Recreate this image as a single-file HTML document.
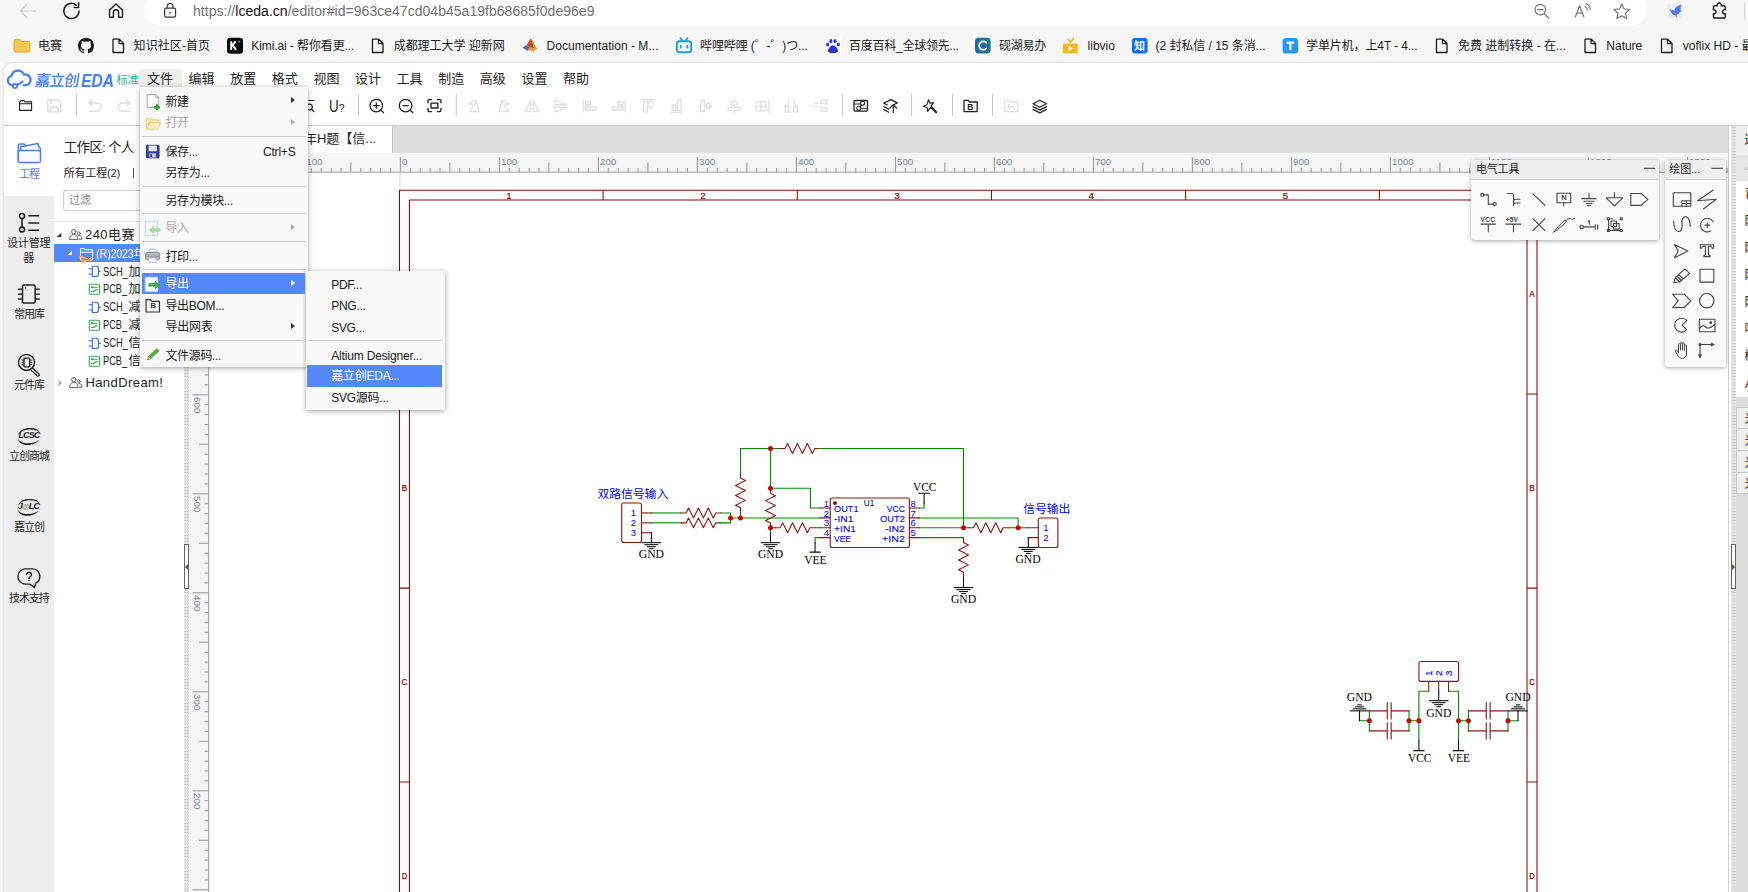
<!DOCTYPE html>
<html lang="zh-CN">
<head>
<meta charset="utf-8">
<title>嘉立创EDA</title>
<style>
*{box-sizing:border-box;margin:0;padding:0}
html,body{width:1748px;height:892px;overflow:hidden;background:#f7f7f7}
body{position:relative;font-family:"Liberation Sans","Noto Sans CJK SC",sans-serif;color:#222;font-size:12px}
.a{position:absolute;white-space:nowrap}
.t{position:absolute;white-space:nowrap;line-height:1;transform-origin:0 50%}
svg{position:absolute;overflow:visible}
.bm{font-size:12px;color:#1b1b1b;top:39.5px}
.page{left:4px;top:63px;width:1760px;height:840px;background:#fff;border-radius:9px 0 0 0;box-shadow:0 0 3px rgba(0,0,0,.18)}
.mn{font-size:13px;color:#222;top:71.5px}
.menu{background:#f9f9f9;box-shadow:0 1px 5px rgba(0,0,0,.38);}
.mi{font-size:12px;color:#1a1a1a}
.mi.d{color:#a9a9a9}
.sep{position:absolute;height:1px;background:#c9c9c9}
.arr{position:absolute;width:0;height:0;border-left:4px solid #333;border-top:3.5px solid transparent;border-bottom:3.5px solid transparent}
.arr.d{border-left-color:#aaa}
.sb{font-size:11px;color:#222;text-align:center;width:49px;left:4px;line-height:13px;white-space:normal}
.tr{font-size:12px;color:#222}
.rl{font-size:9.700px;fill:#7d8797;font-family:"Liberation Sans",sans-serif}
.dots{background-color:#e2e2e2;background-image:radial-gradient(circle,#c4c4c4 .6px,transparent .8px);background-size:2.400px 3px}
</style>
</head>
<body>
<!-- ===== browser chrome ===== -->
<div class="a" style="left:144px;top:-8px;width:1503px;height:34px;background:#fff;border-radius:17px;"></div>
<svg style="left:0;top:0" width="1748" height="30" viewBox="0 0 1748 30" fill="none" stroke-linecap="round" stroke-linejoin="round">
  <!-- back -->
  <path d="M36 11H21M27 4.5L20.5 11L27 17.5" stroke="#cbcbcb" stroke-width="1.2"/>
  <!-- refresh -->
  <path d="M79 11A7.6 7.6 0 1 1 76.2 5.1" stroke="#1b1b1b" stroke-width="1.5"/>
  <path d="M78.6 2.8V7.4H74" stroke="#1b1b1b" stroke-width="1.5"/>
  <!-- home -->
  <path d="M109.5 10.2L116 4L122.5 10.2V17.3H118.6V12.4a2.6 2.6 0 0 0-5.2 0V17.3H109.5Z" stroke="#1b1b1b" stroke-width="1.4"/>
  <!-- lock -->
  <rect x="164.6" y="8.2" width="11" height="9" rx="1.6" stroke="#3a3a3a" stroke-width="1.2"/>
  <path d="M167.2 8V6.2a2.9 2.9 0 0 1 5.8 0V8" stroke="#3a3a3a" stroke-width="1.2"/>
  <circle cx="170.1" cy="12.7" r="0.9" fill="#3a3a3a" stroke="none"/>
  <!-- zoom out -->
  <circle cx="1540.3" cy="9.6" r="5.3" stroke="#767676" stroke-width="1.2"/>
  <path d="M1537.6 9.6H1543M1544.2 13.6L1548.6 18" stroke="#767676" stroke-width="1.2"/>
  <!-- star -->
  <path d="M1621.8 3.8L1624.1 8.9L1629.6 9.5L1625.5 13.2L1626.7 18.6L1621.8 15.8L1616.9 18.6L1618.1 13.2L1614 9.5L1619.5 8.9Z" stroke="#767676" stroke-width="1.2"/>
  <!-- read aloud -->
  <path d="M1575.3 17L1579.6 5.6L1583.9 17M1576.8 13.2H1582.4" stroke="#767676" stroke-width="1.2"/>
  <path d="M1585 6.4a4.4 4.4 0 0 1 2.4 3.6M1586 3.6a7.4 7.4 0 0 1 4.3 6" stroke="#767676" stroke-width="1.1"/>
  <!-- bird ext -->
  <rect x="1667.400" y="3.500" width="15" height="15" rx="1.500" fill="#eceffc" stroke="none"/>
  <path d="M1669.600 9.300L1674.300 10.600C1675.300 6.800 1678.300 5 1681.800 4.800C1680.300 6.600 1680.900 8.300 1680.500 10.300L1682.300 11.300L1680 11.800C1679.300 13.600 1677.900 14.600 1676.300 15L1677.600 17.600L1674.600 15.300C1672 14.300 1670.600 12 1669.600 9.300Z" fill="#4f7cf3" stroke="none"/>
  <path d="M1676.300 15L1677.600 17.600L1674.600 15.300C1675.600 14.300 1676.600 13 1677.300 11.300C1677.300 12.600 1677 14 1676.300 15Z" fill="#a86af0" stroke="none"/>
  <!-- puzzle -->
  <path d="M1714.6 5.8h2.6a2.1 2.1 0 1 1 4 0h2.8a1.2 1.2 0 0 1 1.2 1.2v2.7a2.1 2.1 0 1 0 0 4v3.1a1.2 1.2 0 0 1-1.2 1.2h-9.4a1.2 1.2 0 0 1-1.2-1.2v-3a2.1 2.1 0 1 0 0-4.1V7a1.2 1.2 0 0 1 1.2-1.2Z" stroke="#1b1b1b" stroke-width="1.4"/>
  <path d="M1744.5 3V19" stroke="#cfcfcf" stroke-width="1"/>
</svg>
<div class="t" id="url" style="letter-spacing:0.030px;left:193px;top:4px;font-size:14px;color:#707070;">https://<span style="color:#111">lceda.cn</span>/editor#id=963ce47cd04b45a19fb68685f0de96e9</div>

<!-- bookmarks -->
<svg style="left:0;top:30px" width="1748" height="32" viewBox="0 30 1748 32" fill="none" stroke-linejoin="round" stroke-linecap="round">
  <!-- folder -->
  <path d="M14 41.2a1.6 1.6 0 0 1 1.6-1.6h4.3l1.9 1.7h6.5a1.6 1.6 0 0 1 1.6 1.6v7.6a1.6 1.6 0 0 1-1.6 1.6h-12.7a1.6 1.6 0 0 1-1.6-1.6Z" fill="#f5c951" stroke="#dba72c" stroke-width="1"/>
  <!-- github -->
  <path transform="translate(78 37.700)" fill="#1b1b1b" d="M8 0C3.58 0 0 3.58 0 8c0 3.54 2.29 6.53 5.47 7.59.4.07.55-.17.55-.38 0-.19-.01-.82-.01-1.49-2.01.37-2.53-.49-2.69-.94-.09-.23-.48-.94-.82-1.13-.28-.15-.68-.52-.01-.53.63-.01 1.08.58 1.23.82.72 1.21 1.87.87 2.33.66.07-.52.28-.87.51-1.07-1.78-.2-3.64-.89-3.64-3.95 0-.87.31-1.59.82-2.15-.08-.2-.36-1.02.08-2.12 0 0 .67-.21 2.2.82.64-.18 1.32-.27 2-.27.68 0 1.36.09 2 .27 1.53-1.04 2.2-.82 2.2-.82.44 1.1.16 1.92.08 2.12.51.56.82 1.27.82 2.15 0 3.07-1.87 3.75-3.65 3.95.29.25.54.73.54 1.48 0 1.07-.01 1.93-.01 2.2 0 .21.15.46.55.38A8.013 8.013 0 0016 8c0-4.42-3.58-8-8-8z"/>
  <!-- doc icons -->
  <g stroke="#1b1b1b" stroke-width="1.3">
    <path id="doc" d="M113 39.2h6.200l4.300 4.300v9h-10.500Z M119 39.4v4.300h4.300" />
  </g>
  <use href="#doc" x="259.500" stroke="#1b1b1b" stroke-width="1.3"/>
  <use href="#doc" x="1323.500" stroke="#1b1b1b" stroke-width="1.3"/>
  <use href="#doc" x="1472" stroke="#1b1b1b" stroke-width="1.3"/>
  <use href="#doc" x="1548.500" stroke="#1b1b1b" stroke-width="1.3"/>
  <!-- kimi -->
  <rect x="227" y="37.7" width="16" height="16" rx="3.2" fill="#0a0a0a"/>
  <path d="M231.200 41.3v8.800M231.500 46l4.200-4.700M232.800 45.200l3.200 4.900" stroke="#fff" stroke-width="1.9" stroke-linecap="butt"/>
  <circle cx="239.300" cy="41.600" r="1.100" fill="#2d8cff"/>
  <!-- matlab -->
  <path d="M522.500 47.500l4.200-2.600 3.300 2.700-2.500 3.400Z" fill="#4a6fb5"/>
  <path d="M526.700 44.900c1.800-2.200 2.800-5.300 4.300-6.300l1.200 2.400 2.200 7.800-4.400-1.200Z" fill="#c8502a"/>
  <path d="M531 38.600c1.300.4 3.200 6.200 6.200 10.500-1.600-.5-2.700.7-3.800 3.200-1.200-1.300-2.200-2.900-5.900-1.300l2.500-3.400 4.400 1.200Z" fill="#e8902a"/>
  <!-- bilibili -->
  <rect x="676.800" y="41.200" width="14.400" height="11" rx="2.600" stroke="#1ba0d8" stroke-width="1.900"/>
  <path d="M680.500 38.300l2 2.600M687.500 38.300l-2 2.600" stroke="#1ba0d8" stroke-width="1.800"/>
  <path d="M680.700 45.600v2M687.300 45.600v2" stroke="#1ba0d8" stroke-width="1.900"/>
  <!-- baidu paw -->
  <rect x="825" y="37.500" width="16" height="16" rx="2" fill="#fff"/>
  <g fill="#2932e1">
    <ellipse cx="827.600" cy="44.600" rx="1.500" ry="2"/>
    <ellipse cx="830.900" cy="41.200" rx="1.500" ry="2.100"/>
    <ellipse cx="835" cy="41.200" rx="1.500" ry="2.100"/>
    <ellipse cx="838.300" cy="44.600" rx="1.500" ry="2"/>
    <path d="M833 45.200c2 0 5 3.500 5 5.600 0 1.900-1.700 2.200-5 2.200s-5-.3-5-2.200c0-2.100 3-5.600 5-5.600Z"/>
  </g>
  <!-- C icon -->
  <rect x="975" y="37.800" width="15.600" height="15.600" rx="3.600" fill="#1f6f9b"/>
  <path d="M986.300 42.700a4.200 4.200 0 1 0 0 5.800" stroke="#fff" stroke-width="1.700"/>
  <!-- libvio -->
  <path d="M1063 43.600h14.600v9.600h-14.600Z" fill="#f6b51d"/>
  <path d="M1068 39l2.400 3.300 3-4" stroke="#f6b51d" stroke-width="1.500"/>
  <path d="M1068.300 45.800l5 2.700-5 2.700Z" fill="#fff"/>
  <!-- zhihu -->
  <rect x="1132" y="38" width="15.600" height="15.600" rx="3" fill="#0a6cff"/>
  <!-- T icon -->
  <rect x="1282.600" y="38" width="15.600" height="15.600" rx="3.400" fill="#2697ee"/>
  <path d="M1286.600 42.600h7.600M1290.400 42.600v7.600" stroke="#fff" stroke-width="2.100" stroke-linecap="butt"/>
</svg>
<div class="t" style="left:1134px;top:40.500px;font-size:11px;color:#fff;font-weight:700">知</div>
<div class="t bm" style="letter-spacing:-0.008px;left:38px">电赛</div>
<div class="t bm" style="letter-spacing:0.071px;left:133.600px">知识社区-首页</div>
<div class="t bm" style="letter-spacing:-0.099px;left:251.300px">Kimi.ai - 帮你看更...</div>
<div class="t bm" style="letter-spacing:-0.034px;left:393.700px">成都理工大学 迎新网</div>
<div class="t bm" style="letter-spacing:0.031px;left:546.500px">Documentation - M...</div>
<div class="t bm" style="letter-spacing:-0.116px;left:700px">哔哩哔哩 (゜-゜)つ...</div>
<div class="t bm" style="letter-spacing:-0.249px;left:849px">百度百科_全球领先...</div>
<div class="t bm" style="letter-spacing:-0.254px;left:999px">砚湖易办</div>
<div class="t bm" style="letter-spacing:0.023px;left:1087.500px">libvio</div>
<div class="t bm" style="letter-spacing:-0.041px;left:1155.500px">(2 封私信 / 15 条消...</div>
<div class="t bm" style="letter-spacing:-0.109px;left:1306px">学单片机，上4T - 4...</div>
<div class="t bm" style="letter-spacing:-0.001px;left:1458px">免费 进制转换 - 在...</div>
<div class="t bm" style="letter-spacing:-0.005px;left:1606.300px">Nature</div>
<div class="t bm" style="left:1682.800px">voflix HD - 最新</div>
<!-- ===== app page ===== -->
<div class="a page"></div>
<!-- logo -->
<svg style="left:0;top:60px" width="160" height="70" viewBox="0 60 160 70" fill="none" stroke-linecap="round" stroke-linejoin="round">
  <path d="M13.300 85.200h-.8a4.700 4.700 0 0 1-.9-9.300a6.500 6.500 0 0 1 12.400-1.300a5.400 5.400 0 0 1 2.300 10.600h-2.600" stroke="#4b7df6" stroke-width="2.300"/>
  <circle cx="15" cy="86" r="2.100" stroke="#4b7df6" stroke-width="1.800"/>
  <path d="M17 85l5.600-3.300" stroke="#4b7df6" stroke-width="2.100"/>
  <!-- toolbar: open folder -->
  <path d="M19.600 110.400v-8.300l1.500-1.500h3.200l1 1.300h6.300v8.500Z M19.800 103.800h11.600" stroke="#222" stroke-width="1.100"/>
  <!-- save (disabled) -->
  <path d="M47.800 99.900h10.300l2.800 2.800v9h-13.100Z M50.600 111.500v-4.400h7.600v4.400 M50.800 100.300v3.300" stroke="#e0e0e0" stroke-width="1.600"/>
  <path d="M76.500 94.300V115.600" stroke="#c6c6c6" stroke-width="1"/>
  <!-- undo / redo -->
  <path d="M89 111.300h7.600a4.200 4.200 0 0 0 0-8.400h-7.300M92 100.300l-3 2.600l3 2.600" stroke="#e0e0e0" stroke-width="1.600"/>
  <path d="M130 111.300h-7.600a4.200 4.200 0 0 1 0-8.400h7.300M127 100.300l3 2.600l-3 2.600" stroke="#e0e0e0" stroke-width="1.600"/>
</svg>
<div class="t" style="letter-spacing:-0.969px;left:34.800px;top:72.800px;font-size:15.500px;font-weight:500;color:#4b7df6"><span style="display:inline-block;transform:skewX(-9deg)">嘉立创</span></div>
<div class="t" style="left:81.300px;top:71.600px;font-size:18px;font-weight:700;font-style:italic;color:#4b7df6;transform:scaleX(.875);letter-spacing:-.2px">EDA</div>
<div class="t" style="letter-spacing:-0.250px;left:116.200px;top:75.200px;font-size:11.500px;color:#22b598">标准</div>
<!-- menubar -->
<div class="a" style="left:139px;top:68.500px;width:42.500px;height:19px;background:#efefef;border-radius:2px 2px 0 0"></div>
<div class="t mn" style="letter-spacing:-0.008px;left:147px">文件</div>
<div class="t mn" style="letter-spacing:-0.008px;left:188.600px">编辑</div>
<div class="t mn" style="letter-spacing:-0.008px;left:230.200px">放置</div>
<div class="t mn" style="letter-spacing:-0.008px;left:271.800px">格式</div>
<div class="t mn" style="letter-spacing:-0.008px;left:313.400px">视图</div>
<div class="t mn" style="letter-spacing:-0.008px;left:355px">设计</div>
<div class="t mn" style="letter-spacing:-0.008px;left:396.600px">工具</div>
<div class="t mn" style="letter-spacing:-0.008px;left:438.200px">制造</div>
<div class="t mn" style="letter-spacing:-0.008px;left:479.800px">高级</div>
<div class="t mn" style="letter-spacing:-0.008px;left:521.400px">设置</div>
<div class="t mn" style="letter-spacing:-0.008px;left:563px">帮助</div>
<svg style="left:300px;top:90px" width="800" height="34" viewBox="300 90 800 34" fill="none" stroke-linecap="round" stroke-linejoin="round">
<path d="M308 100.500h6" stroke="#222" stroke-width="1.200"/><circle cx="309.500" cy="107" r="2.800" stroke="#222" stroke-width="1.200"/><path d="M311.600 109.200l2.300 2.400" stroke="#222" stroke-width="1.300"/>
<path d="M358.5 94.3V115.6" stroke="#c6c6c6" stroke-width="1"/>
<circle cx="376.3" cy="105.600" r="6.300" stroke="#222" stroke-width="1.300"/>
<path d="M380.90000000000003 110.200l2.600 2.400" stroke="#222" stroke-width="1.300"/>
<path d="M373.6 105.600h5.400" stroke="#222" stroke-width="1.200"/>
<path d="M376.3 102.900v5.400" stroke="#222" stroke-width="1.200"/>
<circle cx="405.6" cy="105.600" r="6.300" stroke="#222" stroke-width="1.300"/>
<path d="M410.20000000000005 110.200l2.600 2.400" stroke="#222" stroke-width="1.300"/>
<path d="M402.90000000000003 105.600h5.400" stroke="#222" stroke-width="1.200"/>
<path d="M428 102.800v-2.200a1 1 0 0 1 1-1h2.400M437.500 99.600h2.400a1 1 0 0 1 1 1v2.200M440.900 108.400v2.200a1 1 0 0 1-1 1h-2.400M431.400 111.600h-2.400a1 1 0 0 1-1-1v-2.200" stroke="#222" stroke-width="1.400"/>
<rect x="431" y="103.200" width="6.900" height="4.800" stroke="#222" stroke-width="1.300"/>
<path d="M456.3 94.3V115.6" stroke="#c6c6c6" stroke-width="1"/>
<path d="M478.8 111.500h-9l6.500-10.500ZM470.3 104.500a5 5 0 0 1 5-4M469.0 103l1.300 2l2-1.200" stroke="#e0e0e0" stroke-width="1.400"/>
<path d="M499.2 111.500h9l-6.500-10.500ZM507.7 104.500a5 5 0 0 0-5-4M509.0 103l-1.300 2l-2-1.200" stroke="#e0e0e0" stroke-width="1.400"/>
<path d="M530.7 100.500v11h-5.400ZM533.3 100.500v11h5.400Z" stroke="#e0e0e0" stroke-width="1.400"/>
<path d="M555 100.300l12 4.500h-12ZM555 112l12-4.700h-12Z" stroke="#e0e0e0" stroke-width="1.400"/>
<path d="M583.5 100.500v11.500" stroke="#e0e0e0" stroke-width="1.400"/><rect x="585.7" y="102" width="5" height="3" stroke="#e0e0e0" stroke-width="1.400"/><rect x="585.7" y="107" width="10.500" height="3" stroke="#e0e0e0" stroke-width="1.400"/>
<path d="M625.2 100.500v11.500" stroke="#e0e0e0" stroke-width="1.400"/><rect x="618.0" y="102" width="5" height="3" stroke="#e0e0e0" stroke-width="1.400"/><rect x="612.5" y="107" width="10.500" height="3" stroke="#e0e0e0" stroke-width="1.400"/>
<path d="M642 99.500h12" stroke="#e0e0e0" stroke-width="1.400"/><rect x="643.7" y="101.500" width="3.600" height="10.500" stroke="#e0e0e0" stroke-width="1.400"/><rect x="649" y="101.500" width="3.600" height="5.500" stroke="#e0e0e0" stroke-width="1.400"/>
<path d="M670.5 112.500h12" stroke="#e0e0e0" stroke-width="1.400"/><rect x="677.5" y="100" width="3.600" height="10.500" stroke="#e0e0e0" stroke-width="1.400"/><rect x="672.2" y="105" width="3.600" height="5.500" stroke="#e0e0e0" stroke-width="1.400"/>
<path d="M698.8 106h13" stroke="#e0e0e0" stroke-width="1.300"/><rect x="700.8" y="100.500" width="3.600" height="11" fill="#fff" stroke="#e0e0e0" stroke-width="1.400"/><rect x="706.5999999999999" y="103.500" width="3.300" height="5" fill="#fff" stroke="#e0e0e0" stroke-width="1.400"/>
<path d="M734 99.500v13" stroke="#e0e0e0" stroke-width="1.300"/><rect x="730.8" y="101.500" width="6.400" height="3.300" fill="#fff" stroke="#e0e0e0" stroke-width="1.400"/><rect x="728.3" y="107.300" width="11.400" height="3.300" fill="#fff" stroke="#e0e0e0" stroke-width="1.400"/>
<rect x="756.2" y="101.500" width="9.600" height="9.200" stroke="#e0e0e0" stroke-width="1.400"/><path d="M761.0 101.500v9.200M756.2 106.100h9.600M769.0 99.500v13" stroke="#e0e0e0" stroke-width="1.400"/>
<path d="M788.5999999999999 99.500v4.500M794.0 99.500v4.500" stroke="#e0e0e0" stroke-width="1.300"/><rect x="785.3" y="106" width="3.600" height="6" stroke="#e0e0e0" stroke-width="1.400"/><rect x="793.6999999999999" y="106" width="3.600" height="6" stroke="#e0e0e0" stroke-width="1.400"/>
<path d="M813.8 103.300h4.500M813.8 106.700h4.500" stroke="#e0e0e0" stroke-width="1.300"/><rect x="820.8" y="100.300" width="6" height="3.600" stroke="#e0e0e0" stroke-width="1.400"/><rect x="820.8" y="107.500" width="6" height="3.600" stroke="#e0e0e0" stroke-width="1.400"/>
<path d="M842.4 94.3V115.6" stroke="#c6c6c6" stroke-width="1"/>
<rect x="854" y="100.500" width="13.500" height="10.600" rx="1" stroke="#222" stroke-width="1.300"/><circle cx="862.600" cy="103.300" r="2" stroke="#222" stroke-width="1.100"/><circle cx="858.800" cy="108.200" r="2" stroke="#222" stroke-width="1.100"/><path d="M854.300 104h5.500M861.500 108.200h5.800M860.300 106.300l1.200-1.300" stroke="#222" stroke-width="1.100"/>
<path d="M883.8 103.200l7-3.600l6.500 3.300l-3 1.600M883.8 103.200l3.300 1.700M883.8 106.500l5 2.600M883.8 109.600l5 2.600M893.3 112.500v-7.500M890.0 108l3.300-3.300l3.300 3.300" stroke="#222" stroke-width="1.200"/>
<path d="M911.6 94.3V115.6" stroke="#c6c6c6" stroke-width="1"/>
<path d="M928.5 99.700l1.300 3.600l3.800-.7l-2.300 3.100l2 3l-3.600-.6l-2 3.300l-.5-3.800l-3.700-1.200l3.400-1.700Z" stroke="#222" stroke-width="1.100"/><path d="M931 107.300l5.200 5" stroke="#222" stroke-width="2"/>
<path d="M952.5 94.3V115.6" stroke="#c6c6c6" stroke-width="1"/>
<path d="M964 111.600v-11.200h4.200l1.200 1.600h7.800v9.600Z" stroke="#222" stroke-width="1.300"/>
<path d="M992.5 94.3V115.6" stroke="#c6c6c6" stroke-width="1"/>
<path d="M1004.500 111.600v-11.200h4.200l1.200 1.600h7.800v9.600Z" stroke="#e0e0e0" stroke-width="1.300"/><path d="M1007.500 106.500h4.500a2.300 2.300 0 0 1 2.300 2.300v.8M1009.500 104.300l-2.300 2.200l2.300 2.200" stroke="#e0e0e0" stroke-width="1.300"/>
<path d="M1033.0 103.700l6.800-3.500l6.800 3.500l-6.800 3.500ZM1033.0 106.600l6.800 3.500l6.800-3.500M1033.0 109.400l6.800 3.500l6.800-3.500" stroke="#222" stroke-width="1.200"/>
</svg>
<div class="t" style="left:328.600px;top:99px;font-size:16.800px;color:#2a2a2a;transform:scaleX(.8)">U</div>
<div class="t" style="left:338.800px;top:102.800px;font-size:10.500px;color:#2a2a2a">?</div>
<div class="t" style="left:967.300px;top:102.500px;font-size:8.500px;color:#222;font-weight:700">B</div>
<!-- line under toolbar -->
<div class="a" style="left:4px;top:124.500px;width:1744px;height:1px;background:#cfcfcf"></div>

<!-- left sidebar -->
<div class="a" style="left:4px;top:196px;width:49.500px;height:700px;background:#eeeeee"></div>
<div class="a" style="left:53px;top:221px;width:132px;height:1px;background:#e3e3e3"></div>
<svg style="left:0;top:126px" width="60" height="500" viewBox="0 126 60 500" fill="none" stroke-linecap="round" stroke-linejoin="round">
  <!-- 工程 -->
  <g stroke="#4d7cfe" stroke-width="1.500">
    <path d="M18.300 161v-15.300a1.700 1.700 0 0 1 1.700-1.700h4.300l1.700 1.900"/>
    <rect x="18.300" y="150.500" width="22.200" height="12.100" rx="1.700"/>
    <path d="M20.600 150.300v-3.500l17.400-3.300l.8 3.400a2 2 0 0 1 1.600 2v2"/>
  </g>
  <!-- 设计管理器 -->
  <g stroke="#222" stroke-width="1.500">
    <circle cx="22" cy="216.100" r="2.500"/><circle cx="22" cy="229.600" r="2.500"/>
    <path d="M22 218.700v8.400M28.900 215.800h9.800M28.900 223h9.800M28.900 230.200h9.800" stroke-width="1.600"/>
  </g>
  <!-- 常用库 -->
  <g stroke="#222" stroke-width="1.500">
    <rect x="22.500" y="285.100" width="12.600" height="18" rx="1.300"/>
    <path d="M18.300 289.300h3.700M18.300 294.200h3.700M18.300 299h3.700M35.600 289.300h3.700M35.600 294.200h3.700M35.600 299h3.700" stroke-width="1.400"/>
    <circle cx="25.500" cy="288.100" r=".8" fill="#222" stroke="none"/>
  </g>
  <!-- 元件库 -->
  <g stroke="#222" stroke-width="1.500">
    <circle cx="26.500" cy="362.400" r="8"/>
    <path d="M32.600 368.300l6.300 5.400a1.300 1.300 0 0 1-1.700 2l-6.200-5.600" stroke-width="1.200"/>
    <rect x="24" y="358.100" width="5.600" height="8.800" rx=".6" stroke-width="1.300"/>
    <path d="M21.800 360h2M21.800 362.400h2M21.800 364.800h2M29.800 360h2M29.800 362.400h2M29.800 364.800h2" stroke-width="1"/>
  </g>
  <!-- 立创商城 / 嘉立创 swoosh -->
  <g fill="#222" stroke="none" transform="translate(0 .6)">
    <path id="sw" d="M26 427.900c7-1.300 13.200.8 13.900 4.500-1.800-2.600-6.600-3.900-12.600-3.300-4.600.6-8 2.900-8.900 5.900-.1-3.100 2.800-6.100 7.600-7.100Zm13.300 11.300c-2 3.500-8.200 5.900-13.800 5.100-4.600-.7-7.300-3.200-7.100-6.200.7 2.400 3.600 4.100 7.800 4.500 5.100.5 10.500-1 13.100-3.400Z"/>
    <use href="#sw" x="-.3" y="70.800"/>
  </g>
  <!-- 技术支持 -->
  <g stroke="#222" stroke-width="1.400">
    <path d="M25.500 568.900h6.800a7.600 7.600 0 0 1 3.500 14.300l-1.400 4.300l-4.500-3.400h-4.400a7.600 7.600 0 0 1 0-15.200Z"/>
    <path d="M26.600 574.600a2.400 2.400 0 1 1 3.700 2c-1 .6-1.300 1-1.300 1.900M29 580.300v.3" stroke-width="1.400"/>
  </g>
</svg>
<div class="t" style="letter-spacing:-0.925px;left:18.500px;top:431.200px;font-size:9px;font-weight:700;font-style:italic;color:#222">LCSC</div>
<div class="t" style="letter-spacing:-0.711px;left:17.800px;top:502.300px;font-size:9px;font-weight:700;font-style:italic;color:#222">J<span style="color:#888;font-size:7.500px">@</span>LC</div>
<div class="t" style="letter-spacing:-1.050px;left:19.100px;top:168.500px;font-size:11px;color:#4d7cfe">工程</div>
<div class="t" style="letter-spacing:-0.150px;left:7px;top:238.400px;font-size:11px">设计管理</div>
<div class="t" style="left:23.300px;top:252.700px;font-size:11px">器</div>
<div class="t" style="letter-spacing:-1.033px;left:14.100px;top:308.700px;font-size:11px">常用库</div>
<div class="t" style="letter-spacing:-1.033px;left:14.100px;top:380px;font-size:11px">元件库</div>
<div class="t" style="letter-spacing:-0.975px;left:9px;top:451.200px;font-size:11px">立创商城</div>
<div class="t" style="letter-spacing:-1.033px;left:14.100px;top:522.200px;font-size:11px">嘉立创</div>
<div class="t" style="letter-spacing:-1.050px;left:9px;top:593.200px;font-size:11px">技术支持</div>

<!-- project panel -->
<div class="t" style="letter-spacing:-0.759px;left:63.700px;top:140.800px;font-size:13.500px;color:#222">工作区: 个人</div>
<div class="t" style="letter-spacing:-0.165px;left:63.700px;top:167.500px;font-size:11px;color:#222">所有工程(2)</div>
<div class="a" style="left:132.500px;top:168px;width:1px;height:10px;background:#555"></div>
<div class="a" style="left:63px;top:190px;width:121px;height:20.500px;border:1px solid #cfcfcf;border-right:0;border-radius:3px 0 0 3px;background:#fff"></div>
<div class="t" style="letter-spacing:0.000px;left:69px;top:194.800px;font-size:11px;color:#8a8a8a">过滤</div>
<!-- tree -->
<div class="a" style="left:54px;top:244.200px;width:131px;height:17.600px;background:#5588fd"></div>
<svg style="left:50px;top:222px" width="140" height="175" viewBox="50 222 140 175" fill="none" stroke-linecap="round" stroke-linejoin="round">
  <path d="M56.800 237l4.500-4.300v4.300Z" fill="#333"/>
  <path d="M67.500 254.900l4.400-4.400v4.400Z" fill="#fff"/>
  <path d="M58.600 379.800l3.400 3.300l-3.400 3.300Z" fill="#a9a9a9" stroke="none"/>
  <g id="team" stroke="#555" stroke-width="0.900">
    <circle cx="73.800" cy="231.600" r="2.200"/><path d="M69.600 239.200c0-3 1.700-4.700 4.200-4.700s4.200 1.700 4.200 4.700Z"/>
    <circle cx="78.800" cy="233.400" r="1.500"/><path d="M79 235.600c2 0 3 1.400 3 3.600h-3"/>
  </g>
  <use href="#team" y="148"/>
  <!-- project icon (white on blue) -->
  <path d="M80.500 259v-9.500a1 1 0 0 1 1-1h2.600l.9 1.100h6.600a1 1 0 0 1 1 1v8.400a1 1 0 0 1-1 1h-10.100a1 1 0 0 1-1-1Z M80.700 252.300h12.200" stroke="#fff" stroke-width="1.100"/>
  <path d="M77.800 257.300c2.200-1.600 4-2 6.200-.8l3.300 1.500c1 .5.400 1.700-.6 1.500l-3.100-.7M87.300 259l4.400-2.300c1-.5 1.800.6 1 1.300l-5 3.300c-1.500.9-3 .9-4.600.5l-5-1.300Z" fill="#ffb27a" stroke="#b55a2a" stroke-width="0.500"/>
  <!-- sch / pcb icons -->
  <g id="sch" stroke="#2f6fe0" stroke-width="1.100">
    <path d="M92.300 266.300h3.600a2.600 2.600 0 0 1 2.600 2.600v5a2.600 2.600 0 0 1-2.600 2.600h-3.600Z"/>
    <path d="M89 268.800h3.300M89 274h3.300M98.500 271.400h1.700"/>
  </g>
  <use href="#sch" y="36"/>
  <use href="#sch" y="72"/>
  <g id="pcb" stroke="#33a853" stroke-width="1.100">
    <rect x="89.300" y="284.300" width="10.200" height="10" rx="1"/>
    <path d="M91.500 287.300h5.800M91.500 291.500h2.400l1.500-1.600h2"/>
    <circle cx="92" cy="287.300" r=".6"/>
  </g>
  <use href="#pcb" y="36"/>
  <use href="#pcb" y="72"/>
</svg>
<div class="t" style="letter-spacing:0.439px;left:85px;top:227.700px;font-size:13px;color:#222">240电赛</div>
<div class="a" style="left:95.700px;top:247px;width:44px;height:13px;overflow:hidden"><div class="t" style="left:0;top:.5px;font-size:12px;color:#fff;transform:scaleX(.866)">(R)2023</div><div class="t" style="left:37.800px;top:.5px;font-size:12px;color:#fff">年H题</div></div>
<div class="t tr" style="left:103.400px;top:265.5px;transform:scaleX(.778)">SCH_</div>
<div class="t tr" style="left:128.400px;top:265.5px">加法器</div>
<div class="t tr" style="left:103.400px;top:283.3px;transform:scaleX(.766)">PCB_</div>
<div class="t tr" style="left:128.400px;top:283.3px">加法器</div>
<div class="t tr" style="left:103.400px;top:301.1px;transform:scaleX(.778)">SCH_</div>
<div class="t tr" style="left:128.400px;top:301.1px">减法器</div>
<div class="t tr" style="left:103.400px;top:318.9px;transform:scaleX(.766)">PCB_</div>
<div class="t tr" style="left:128.400px;top:318.9px">减法器</div>
<div class="t tr" style="left:103.400px;top:336.7px;transform:scaleX(.778)">SCH_</div>
<div class="t tr" style="left:128.400px;top:336.7px">信号分离</div>
<div class="t tr" style="left:103.400px;top:354.5px;transform:scaleX(.766)">PCB_</div>
<div class="t tr" style="left:128.400px;top:354.5px">信号分离</div>
<div class="t" style="letter-spacing:0.430px;left:85.400px;top:375.800px;font-size:13px;color:#222">HandDream!</div>
<div class="a" style="left:189px;top:125.500px;width:1539.500px;height:27.500px;background:#dcdcdc"></div>
<div class="a" style="left:189px;top:125.500px;width:203.500px;height:27.500px;background:#fff;border-right:1px solid #c4c4c4"></div>
<div class="a" style="left:392.500px;top:152px;width:1336px;height:1px;background:#d0d0d0"></div>
<div class="t" style="right:1371.800px;top:131.800px;font-size:13px;color:#222">(R)2023年H题【信...</div>
<div class="a" style="left:189px;top:153px;width:1539.500px;height:740px;background:#fff"></div>
<svg style="left:0;top:0" width="1748" height="892" viewBox="0 0 1748 892" fill="none" stroke-width="1" stroke-linejoin="round">
<rect x="189" y="152.600" width="1539.500" height="19.600" fill="#f5f5f5"/>
<rect x="189" y="152.600" width="19.700" height="740" fill="#f5f5f5"/>
<path d="M189 172.200H1728.500M208.700 152.600V892" stroke="#9b9b9b" stroke-width="1"/>
<path d="M212.3 168V172M222.2 168V172M232.1 168V172M242 168V172M251.9 162.500V172M261.8 168V172M271.7 168V172M281.6 168V172M291.5 168V172M301.4 157V172M311.3 168V172M321.2 168V172M331.1 168V172M341 168V172M350.9 162.500V172M360.8 168V172M370.7 168V172M380.6 168V172M390.5 168V172M400.4 157V172M410.3 168V172M420.2 168V172M430.1 168V172M440 168V172M449.9 162.500V172M459.8 168V172M469.7 168V172M479.6 168V172M489.5 168V172M499.4 157V172M509.3 168V172M519.2 168V172M529.1 168V172M539 168V172M548.9 162.500V172M558.8 168V172M568.7 168V172M578.6 168V172M588.5 168V172M598.4 157V172M608.3 168V172M618.2 168V172M628.1 168V172M638 168V172M647.9 162.500V172M657.8 168V172M667.7 168V172M677.6 168V172M687.5 168V172M697.4 157V172M707.3 168V172M717.2 168V172M727.1 168V172M737 168V172M746.9 162.500V172M756.8 168V172M766.7 168V172M776.6 168V172M786.5 168V172M796.4 157V172M806.3 168V172M816.2 168V172M826.1 168V172M836 168V172M845.9 162.500V172M855.8 168V172M865.7 168V172M875.6 168V172M885.5 168V172M895.4 157V172M905.3 168V172M915.2 168V172M925.1 168V172M935 168V172M944.9 162.500V172M954.8 168V172M964.7 168V172M974.6 168V172M984.5 168V172M994.4 157V172M1004.3 168V172M1014.2 168V172M1024.1 168V172M1034 168V172M1043.9 162.500V172M1053.8 168V172M1063.7 168V172M1073.6 168V172M1083.5 168V172M1093.4 157V172M1103.3 168V172M1113.2 168V172M1123.1 168V172M1133 168V172M1142.9 162.500V172M1152.8 168V172M1162.7 168V172M1172.6 168V172M1182.5 168V172M1192.4 157V172M1202.3 168V172M1212.2 168V172M1222.1 168V172M1232 168V172M1241.9 162.500V172M1251.8 168V172M1261.7 168V172M1271.6 168V172M1281.5 168V172M1291.4 157V172M1301.3 168V172M1311.2 168V172M1321.1 168V172M1331 168V172M1340.9 162.500V172M1350.8 168V172M1360.7 168V172M1370.6 168V172M1380.5 168V172M1390.4 157V172M1400.3 168V172M1410.2 168V172M1420.1 168V172M1430 168V172M1439.9 162.500V172M1449.8 168V172M1459.7 168V172M1469.6 168V172M1479.5 168V172M1489.4 157V172M1499.3 168V172M1509.2 168V172M1519.1 168V172M1529 168V172M1538.9 162.500V172M1548.8 168V172M1558.7 168V172M1568.6 168V172M1578.5 168V172M1588.4 157V172M1598.3 168V172M1608.2 168V172M1618.1 168V172M1628 168V172M1637.9 162.500V172M1647.8 168V172M1657.7 168V172M1667.6 168V172M1677.5 168V172M1687.4 157V172M1697.3 168V172M1707.2 168V172M1717.1 168V172M1727 168V172M192.500 889.8H208.700M204.500 879.9H208.700M204.500 870H208.700M204.500 860.1H208.700M204.500 850.2H208.700M199 840.3H208.700M204.500 830.4H208.700M204.500 820.5H208.700M204.500 810.6H208.700M204.500 800.7H208.700M192.500 790.8H208.700M204.500 780.9H208.700M204.500 771H208.700M204.500 761.1H208.700M204.500 751.2H208.700M199 741.3H208.700M204.500 731.4H208.700M204.500 721.5H208.700M204.500 711.6H208.700M204.500 701.7H208.700M192.500 691.8H208.700M204.500 681.9H208.700M204.500 672H208.700M204.500 662.1H208.700M204.500 652.2H208.700M199 642.3H208.700M204.500 632.4H208.700M204.500 622.5H208.700M204.500 612.6H208.700M204.500 602.7H208.700M192.500 592.8H208.700M204.500 582.9H208.700M204.500 573H208.700M204.500 563.1H208.700M204.500 553.2H208.700M199 543.3H208.700M204.500 533.4H208.700M204.500 523.5H208.700M204.500 513.6H208.700M204.500 503.7H208.700M192.500 493.8H208.700M204.500 483.9H208.700M204.500 474H208.700M204.500 464.1H208.700M204.500 454.2H208.700M199 444.3H208.700M204.500 434.4H208.700M204.500 424.5H208.700M204.500 414.6H208.700M204.500 404.7H208.700M192.500 394.8H208.700M204.500 384.9H208.700M204.500 375H208.700M204.500 365.1H208.700M204.500 355.2H208.700M199 345.3H208.700M204.500 335.4H208.700M204.500 325.5H208.700M204.500 315.6H208.700M204.500 305.7H208.700M192.500 295.8H208.700M204.500 285.9H208.700M204.500 276H208.700M204.500 266.1H208.700M204.500 256.2H208.700M199 246.3H208.700M204.500 236.4H208.700M204.500 226.5H208.700M204.500 216.6H208.700M204.500 206.7H208.700M192.500 196.8H208.700M204.500 186.9H208.700M204.500 177H208.700" stroke="#959595" stroke-width="1"/>
<text class="rl" x="303.1" y="165.400">-100</text>
<text class="rl" x="402.1" y="165.400">0</text>
<text class="rl" x="501.1" y="165.400">100</text>
<text class="rl" x="600.1" y="165.400">200</text>
<text class="rl" x="699.1" y="165.400">300</text>
<text class="rl" x="798.1" y="165.400">400</text>
<text class="rl" x="897.1" y="165.400">500</text>
<text class="rl" x="996.1" y="165.400">600</text>
<text class="rl" x="1095.1" y="165.400">700</text>
<text class="rl" x="1194.1" y="165.400">800</text>
<text class="rl" x="1293.1" y="165.400">900</text>
<text class="rl" x="1392.1" y="165.400">1000</text>
<text class="rl" x="1491.1" y="165.400">1100</text>
<text class="rl" x="1590.1" y="165.400">1200</text>
<text class="rl" x="1689.1" y="165.400">1300</text>
<text class="rl" transform="translate(193.800 199.1) rotate(90)">800</text>
<text class="rl" transform="translate(193.800 298.1) rotate(90)">700</text>
<text class="rl" transform="translate(193.800 397.1) rotate(90)">600</text>
<text class="rl" transform="translate(193.800 496.1) rotate(90)">500</text>
<text class="rl" transform="translate(193.800 595.1) rotate(90)">400</text>
<text class="rl" transform="translate(193.800 694.1) rotate(90)">300</text>
<text class="rl" transform="translate(193.800 793.1) rotate(90)">200</text>
<text class="rl" transform="translate(193.800 892.1) rotate(90)">100</text>
<path d="M399.900 172.700V189.500" stroke="#e0e0e0" stroke-width="1.400"/>
<g stroke="#8a0a0a" stroke-width="1.050">
<path d="M1537 892V190.300H399.500V892"/>
<path d="M1527 892V199.950H409.450V892"/>
<path d="M603.1 190.150V199.950"/>
<path d="M797.3 190.150V199.950"/>
<path d="M991.5 190.150V199.950"/>
<path d="M1185.6 190.150V199.950"/>
<path d="M1379.4 190.150V199.950"/>
<path d="M399.500 394H409.500M1527 394H1537"/>
<path d="M399.500 588.1H409.500M1527 588.1H1537"/>
<path d="M399.500 781.9H409.500M1527 781.9H1537"/>
</g>
<text x="508.9" y="198.8" font-size="9.8" fill="#880000" text-anchor="middle" font-family="'Liberation Sans','Noto Sans CJK SC',sans-serif" stroke="#880000" stroke-width="0.2" font-weight="400">1</text>
<text x="703" y="198.8" font-size="9.8" fill="#880000" text-anchor="middle" font-family="'Liberation Sans','Noto Sans CJK SC',sans-serif" stroke="#880000" stroke-width="0.2" font-weight="400">2</text>
<text x="897.1" y="198.8" font-size="9.8" fill="#880000" text-anchor="middle" font-family="'Liberation Sans','Noto Sans CJK SC',sans-serif" stroke="#880000" stroke-width="0.2" font-weight="400">3</text>
<text x="1091.2" y="198.8" font-size="9.8" fill="#880000" text-anchor="middle" font-family="'Liberation Sans','Noto Sans CJK SC',sans-serif" stroke="#880000" stroke-width="0.2" font-weight="400">4</text>
<text x="1285.4" y="198.8" font-size="9.8" fill="#880000" text-anchor="middle" font-family="'Liberation Sans','Noto Sans CJK SC',sans-serif" stroke="#880000" stroke-width="0.2" font-weight="400">5</text>
<text x="404.4" y="296.9" font-size="9.6" fill="#880000" text-anchor="middle" font-family="'Liberation Sans','Noto Sans CJK SC',sans-serif" stroke="#880000" stroke-width="0.25" textLength="5.400" lengthAdjust="spacingAndGlyphs">A</text>
<text x="1531.9" y="296.9" font-size="9.6" fill="#880000" text-anchor="middle" font-family="'Liberation Sans','Noto Sans CJK SC',sans-serif" stroke="#880000" stroke-width="0.25" textLength="5.400" lengthAdjust="spacingAndGlyphs">A</text>
<text x="404.4" y="490.9" font-size="9.6" fill="#880000" text-anchor="middle" font-family="'Liberation Sans','Noto Sans CJK SC',sans-serif" stroke="#880000" stroke-width="0.25" textLength="5.400" lengthAdjust="spacingAndGlyphs">B</text>
<text x="1531.9" y="490.9" font-size="9.6" fill="#880000" text-anchor="middle" font-family="'Liberation Sans','Noto Sans CJK SC',sans-serif" stroke="#880000" stroke-width="0.25" textLength="5.400" lengthAdjust="spacingAndGlyphs">B</text>
<text x="404.4" y="685" font-size="9.6" fill="#880000" text-anchor="middle" font-family="'Liberation Sans','Noto Sans CJK SC',sans-serif" stroke="#880000" stroke-width="0.25" textLength="5.400" lengthAdjust="spacingAndGlyphs">C</text>
<text x="1531.9" y="685" font-size="9.6" fill="#880000" text-anchor="middle" font-family="'Liberation Sans','Noto Sans CJK SC',sans-serif" stroke="#880000" stroke-width="0.25" textLength="5.400" lengthAdjust="spacingAndGlyphs">C</text>
<text x="404.4" y="878.9" font-size="9.6" fill="#880000" text-anchor="middle" font-family="'Liberation Sans','Noto Sans CJK SC',sans-serif" stroke="#880000" stroke-width="0.25" textLength="5.400" lengthAdjust="spacingAndGlyphs">D</text>
<text x="1531.9" y="878.9" font-size="9.6" fill="#880000" text-anchor="middle" font-family="'Liberation Sans','Noto Sans CJK SC',sans-serif" stroke="#880000" stroke-width="0.25" textLength="5.400" lengthAdjust="spacingAndGlyphs">D</text>
<g stroke-width="1.100" stroke-linecap="square" transform="translate(-.2 .25)">
<rect x="621.900" y="502.700" width="19.800" height="39.600" rx="2" stroke="#8e1414"/>
<path d="M641.700 512.7H651.600" stroke="#8e1414"/>
<text x="633.7" y="516.1" font-size="9.5" fill="#0000ff" text-anchor="middle" font-family="'Liberation Sans','Noto Sans CJK SC',sans-serif" stroke="none" >1</text>
<path d="M641.700 522.6H651.600" stroke="#8e1414"/>
<text x="633.7" y="526" font-size="9.5" fill="#0000ff" text-anchor="middle" font-family="'Liberation Sans','Noto Sans CJK SC',sans-serif" stroke="none" >2</text>
<path d="M641.700 532.5H651.600" stroke="#8e1414"/>
<text x="633.7" y="535.9" font-size="9.5" fill="#0000ff" text-anchor="middle" font-family="'Liberation Sans','Noto Sans CJK SC',sans-serif" stroke="none" >3</text>
<path d="M651.600 512.700H681.300" stroke="#008a00"/>
<path d="M651.600 522.600H681.300" stroke="#008a00"/>
<polyline points="681.3,512.7 686.25,512.7 688.73,507.75 693.68,517.65 698.63,507.75 703.58,517.65 708.53,507.75 713.48,517.65 715.95,512.7 720.9,512.7" stroke="#8e1414"/>
<polyline points="681.3,522.6 686.25,522.6 688.73,517.65 693.68,527.55 698.63,517.65 703.58,527.55 708.53,517.65 713.48,527.55 715.95,522.6 720.9,522.6" stroke="#8e1414"/>
<path d="M720.900 512.700H730.800V522.600H720.900" stroke="#008a00"/>
<path d="M730.800 517.700H820.500" stroke="#008a00"/>
<path d="M651.600 532.500V542.400" stroke="#111"/>
<path d="M642.4 542.4H660.8" stroke="#111"/><path d="M645.2 544.4H658" stroke="#111"/><path d="M647.7 546.4H655.5" stroke="#111"/><path d="M649.9 548.4H653.3" stroke="#111"/>
<text x="651.6" y="557.3" font-size="13" fill="#000" text-anchor="middle" font-family="'Liberation Serif',serif" stroke="none"  textLength="25.2" lengthAdjust="spacingAndGlyphs">GND</text>
<path d="M740.700 517.700V512.500" stroke="#008a00"/>
<polyline points="740.7,472.9 740.7,477.85 745.65,480.32 735.75,485.27 745.65,490.22 735.75,495.17 745.65,500.12 735.75,505.07 740.7,507.55 740.7,512.5" stroke="#8e1414"/>
<path d="M740.700 472.900V448.200H780.300" stroke="#008a00"/>
<polyline points="780.3,448.2 785.25,448.2 787.73,443.25 792.68,453.15 797.63,443.25 802.58,453.15 807.53,443.25 812.48,453.15 814.95,448.2 819.9,448.2" stroke="#8e1414"/>
<path d="M819.900 448.200H963.700V527.500" stroke="#008a00"/>
<path d="M770.700 448.200V488" stroke="#008a00"/>
<polyline points="770.7,488 770.7,492.95 775.65,495.43 765.75,500.38 775.65,505.32 765.75,510.27 775.65,515.23 765.75,520.18 770.7,522.65 770.7,527.6" stroke="#8e1414"/>
<path d="M770.700 488H810.600V507.700H820.500" stroke="#008a00"/>
<path d="M770.700 527.500H775.400" stroke="#008a00"/>
<polyline points="775.4,527.5 780.35,527.5 782.83,522.55 787.78,532.45 792.73,522.55 797.68,532.45 802.63,522.55 807.58,532.45 810.05,527.5 815,527.5" stroke="#8e1414"/>
<path d="M815 527.500H820.500" stroke="#008a00"/>
<path d="M770.700 527.500V532.500" stroke="#008a00"/>
<path d="M770.700 532.500V542.400" stroke="#111"/>
<path d="M761.5 542.4H779.9" stroke="#111"/><path d="M764.3 544.4H777.1" stroke="#111"/><path d="M766.8 546.4H774.6" stroke="#111"/><path d="M769 548.4H772.4" stroke="#111"/>
<text x="770.7" y="557.3" font-size="13" fill="#000" text-anchor="middle" font-family="'Liberation Serif',serif" stroke="none"  textLength="25.2" lengthAdjust="spacingAndGlyphs">GND</text>
<path d="M820.500 537.400H815.300V542.600" stroke="#008a00"/>
<path d="M815.300 542.600V551.900M810.200 551.900H820.500" stroke="#111"/>
<text x="815.6" y="563.3" font-size="13" fill="#000" text-anchor="middle" font-family="'Liberation Serif',serif" stroke="none"  textLength="22.2" lengthAdjust="spacingAndGlyphs">VEE</text>
<rect x="830.400" y="497.800" width="79.200" height="49.500" rx="2" stroke="#8e1414"/>
<circle cx="835.200" cy="502.800" r="1.900" fill="#880000" stroke="none"/>
<path d="M820.500 507.7H830.400M909.600 507.7H919.500" stroke="#8e1414"/>
<text x="829.2" y="506.4" font-size="9.5" fill="#0000ff" text-anchor="end" font-family="'Liberation Sans','Noto Sans CJK SC',sans-serif" stroke="none" >1</text>
<text x="910.8" y="506.4" font-size="9.5" fill="#0000ff" text-anchor="start" font-family="'Liberation Sans','Noto Sans CJK SC',sans-serif" stroke="none" >8</text>
<text x="834.3" y="512.1" font-size="9.9" fill="#0000ff" text-anchor="start" font-family="'Liberation Sans','Noto Sans CJK SC',sans-serif" stroke="#0000ff" stroke-width="0.12" textLength="24.4" lengthAdjust="spacingAndGlyphs">OUT1</text>
<text x="905" y="512.1" font-size="9.9" fill="#0000ff" text-anchor="end" font-family="'Liberation Sans','Noto Sans CJK SC',sans-serif" stroke="#0000ff" stroke-width="0.12" textLength="18" lengthAdjust="spacingAndGlyphs">VCC</text>
<path d="M820.500 517.6H830.400M909.600 517.6H919.500" stroke="#8e1414"/>
<text x="829.2" y="516.3" font-size="9.5" fill="#0000ff" text-anchor="end" font-family="'Liberation Sans','Noto Sans CJK SC',sans-serif" stroke="none" >2</text>
<text x="910.8" y="516.3" font-size="9.5" fill="#0000ff" text-anchor="start" font-family="'Liberation Sans','Noto Sans CJK SC',sans-serif" stroke="none" >7</text>
<text x="834.3" y="522" font-size="9.9" fill="#0000ff" text-anchor="start" font-family="'Liberation Sans','Noto Sans CJK SC',sans-serif" stroke="#0000ff" stroke-width="0.12" textLength="19.3" lengthAdjust="spacingAndGlyphs">-IN1</text>
<text x="905" y="522" font-size="9.9" fill="#0000ff" text-anchor="end" font-family="'Liberation Sans','Noto Sans CJK SC',sans-serif" stroke="#0000ff" stroke-width="0.12" textLength="24.7" lengthAdjust="spacingAndGlyphs">OUT2</text>
<path d="M820.500 527.5H830.400M909.600 527.5H919.500" stroke="#8e1414"/>
<text x="829.2" y="526.2" font-size="9.5" fill="#0000ff" text-anchor="end" font-family="'Liberation Sans','Noto Sans CJK SC',sans-serif" stroke="none" >3</text>
<text x="910.8" y="526.2" font-size="9.5" fill="#0000ff" text-anchor="start" font-family="'Liberation Sans','Noto Sans CJK SC',sans-serif" stroke="none" >6</text>
<text x="834.3" y="531.9" font-size="9.9" fill="#0000ff" text-anchor="start" font-family="'Liberation Sans','Noto Sans CJK SC',sans-serif" stroke="#0000ff" stroke-width="0.12" textLength="21.9" lengthAdjust="spacingAndGlyphs">+IN1</text>
<text x="905" y="531.9" font-size="9.9" fill="#0000ff" text-anchor="end" font-family="'Liberation Sans','Noto Sans CJK SC',sans-serif" stroke="#0000ff" stroke-width="0.12" textLength="19.7" lengthAdjust="spacingAndGlyphs">-IN2</text>
<path d="M820.500 537.4H830.400M909.600 537.4H919.500" stroke="#8e1414"/>
<text x="829.2" y="536.1" font-size="9.5" fill="#0000ff" text-anchor="end" font-family="'Liberation Sans','Noto Sans CJK SC',sans-serif" stroke="none" >4</text>
<text x="910.8" y="536.1" font-size="9.5" fill="#0000ff" text-anchor="start" font-family="'Liberation Sans','Noto Sans CJK SC',sans-serif" stroke="none" >5</text>
<text x="834.3" y="541.8" font-size="9.9" fill="#0000ff" text-anchor="start" font-family="'Liberation Sans','Noto Sans CJK SC',sans-serif" stroke="#0000ff" stroke-width="0.12" textLength="16.8" lengthAdjust="spacingAndGlyphs">VEE</text>
<text x="905" y="541.8" font-size="9.9" fill="#0000ff" text-anchor="end" font-family="'Liberation Sans','Noto Sans CJK SC',sans-serif" stroke="#0000ff" stroke-width="0.12" textLength="22.7" lengthAdjust="spacingAndGlyphs">+IN2</text>
<text x="869.3" y="505.9" font-size="9.8" fill="#000080" text-anchor="middle" font-family="'Liberation Sans','Noto Sans CJK SC',sans-serif" stroke="none" textLength="10.600" lengthAdjust="spacingAndGlyphs">U1</text>
<path d="M919.500 507.700H924.300V503.500" stroke="#008a00"/>
<path d="M924.300 503.500V493M918.900 493H929.600" stroke="#111"/>
<text x="924.8" y="490.5" font-size="13" fill="#000" text-anchor="middle" font-family="'Liberation Serif',serif" stroke="none"  textLength="23.2" lengthAdjust="spacingAndGlyphs">VCC</text>
<path d="M919.500 517.700H1018.300V527.500" stroke="#008a00"/>
<path d="M919.500 527.500H968.700" stroke="#008a00"/>
<polyline points="968.7,527.5 973.65,527.5 976.13,522.55 981.08,532.45 986.03,522.55 990.98,532.45 995.93,522.55 1000.88,532.45 1003.35,527.5 1008.3,527.5" stroke="#8e1414"/>
<path d="M1008.300 527.500H1028.500" stroke="#008a00"/>
<path d="M1028.500 527.500H1038.500M1028.500 537.400H1038.500" stroke="#8e1414"/>
<path d="M919.500 537.400H963.700" stroke="#008a00"/>
<polyline points="963.7,537.4 963.7,542.35 968.65,544.83 958.75,549.78 968.65,554.73 958.75,559.68 968.65,564.63 958.75,569.58 963.7,572.05 963.7,577" stroke="#8e1414"/>
<path d="M963.700 577.100V587.300" stroke="#111"/>
<path d="M954.5 587.3H972.9" stroke="#111"/><path d="M957.3 589.3H970.1" stroke="#111"/><path d="M959.8 591.3H967.6" stroke="#111"/><path d="M962 593.3H965.4" stroke="#111"/>
<text x="963.7" y="602.3" font-size="13" fill="#000" text-anchor="middle" font-family="'Liberation Serif',serif" stroke="none"  textLength="25.2" lengthAdjust="spacingAndGlyphs">GND</text>
<rect x="1038.500" y="517.700" width="19.600" height="29.600" rx="2" stroke="#8e1414"/>
<text x="1046" y="531" font-size="9.5" fill="#0000ff" text-anchor="middle" font-family="'Liberation Sans','Noto Sans CJK SC',sans-serif" stroke="none" >1</text>
<text x="1046" y="540.9" font-size="9.5" fill="#0000ff" text-anchor="middle" font-family="'Liberation Sans','Noto Sans CJK SC',sans-serif" stroke="none" >2</text>
<path d="M1028.500 537.400V547.200" stroke="#111"/>
<path d="M1019.3 547.2H1037.7" stroke="#111"/><path d="M1022.1 549.2H1034.9" stroke="#111"/><path d="M1024.6 551.2H1032.4" stroke="#111"/><path d="M1026.8 553.2H1030.2" stroke="#111"/>
<text x="1028.2" y="562.3" font-size="13" fill="#000" text-anchor="middle" font-family="'Liberation Serif',serif" stroke="none"  textLength="25.2" lengthAdjust="spacingAndGlyphs">GND</text>
<text x="597.6" y="497.9" font-size="11.8" fill="#0000ff" text-anchor="start" font-family="'Liberation Sans','Noto Sans CJK SC',sans-serif" stroke="none" >双路信号输入</text>
<text x="1023.4" y="513" font-size="11.8" fill="#0000ff" text-anchor="start" font-family="'Liberation Sans','Noto Sans CJK SC',sans-serif" stroke="none" >信号输出</text>
<circle cx="730.8" cy="517.7" r="2.5" fill="#cc0000" stroke="none"/>
<circle cx="740.7" cy="517.7" r="2.5" fill="#cc0000" stroke="none"/>
<circle cx="770.7" cy="448.2" r="2.5" fill="#cc0000" stroke="none"/>
<circle cx="770.7" cy="488" r="2.5" fill="#cc0000" stroke="none"/>
<circle cx="770.7" cy="527.5" r="2.5" fill="#cc0000" stroke="none"/>
<circle cx="963.7" cy="527.5" r="2.5" fill="#cc0000" stroke="none"/>
<circle cx="1018.3" cy="527.5" r="2.5" fill="#cc0000" stroke="none"/>
<rect x="1419.100" y="661.200" width="39.700" height="19.900" rx="2" stroke="#8e1414"/>
<text transform="translate(1432 673) rotate(-90)" font-size="9.900" fill="#0000ff" text-anchor="middle" font-family="'Liberation Sans',sans-serif" stroke="#0000ff" stroke-width=".15">1</text>
<text transform="translate(1442 673) rotate(-90)" font-size="9.900" fill="#0000ff" text-anchor="middle" font-family="'Liberation Sans',sans-serif" stroke="#0000ff" stroke-width=".15">2</text>
<text transform="translate(1451.9 673) rotate(-90)" font-size="9.900" fill="#0000ff" text-anchor="middle" font-family="'Liberation Sans',sans-serif" stroke="#0000ff" stroke-width=".15">3</text>
<path d="M1428.900 681.100V691M1438.900 681.100V691M1448.800 681.100V691" stroke="#8e1414"/>
<path d="M1428.900 691H1419.100V740.500" stroke="#008a00"/>
<path d="M1419.100 740.500V750.400M1414 750.400H1424.200" stroke="#111"/>
<path d="M1448.800 691H1458.700V740.500" stroke="#008a00"/>
<path d="M1458.700 740.500V750.400M1453.600 750.400H1463.800" stroke="#111"/>
<path d="M1438.900 691V700.400" stroke="#111"/>
<path d="M1429.7 700.4H1448.1" stroke="#111"/><path d="M1432.5 702.4H1445.3" stroke="#111"/><path d="M1435 704.4H1442.8" stroke="#111"/><path d="M1437.2 706.4H1440.6" stroke="#111"/>
<text x="1439" y="716.7" font-size="13" fill="#000" text-anchor="middle" font-family="'Liberation Serif',serif" stroke="none"  textLength="25.2" lengthAdjust="spacingAndGlyphs">GND</text>
<text x="1419.8" y="761.3" font-size="13" fill="#000" text-anchor="middle" font-family="'Liberation Serif',serif" stroke="none"  textLength="23.2" lengthAdjust="spacingAndGlyphs">VCC</text>
<text x="1459.1" y="761.3" font-size="13" fill="#000" text-anchor="middle" font-family="'Liberation Serif',serif" stroke="none"  textLength="22.2" lengthAdjust="spacingAndGlyphs">VEE</text>
<path d="M1369.6 710.6H1387.45M1387.45 702.5V718.7M1391.35 702.5V718.7M1391.35 710.6H1409.2" stroke="#8e1414"/>
<path d="M1369.6 730.6H1387.45M1387.45 722.5V738.7M1391.35 722.5V738.7M1391.35 730.6H1409.2" stroke="#8e1414"/>
<path d="M1468.6 710.6H1486.45M1486.45 702.5V718.7M1490.35 702.5V718.7M1490.35 710.6H1508.2" stroke="#8e1414"/>
<path d="M1468.6 730.6H1486.45M1486.45 722.5V738.7M1490.35 722.5V738.7M1490.35 730.6H1508.2" stroke="#8e1414"/>
<path d="M1369.600 710.600V730.600M1409.200 710.600V730.600M1468.600 710.600V730.600M1508.200 710.600V730.600" stroke="#008a00"/>
<path d="M1409.200 720.500H1419.100M1458.700 720.500H1468.600M1359.700 720.500H1369.600M1508.200 720.500H1518.200" stroke="#008a00"/>
<path d="M1359.700 720.500V710.600M1518.200 720.500V710.600" stroke="#111"/>
<path d="M1350.5 710.6H1368.9" stroke="#111"/><path d="M1353.3 708.6H1366.1" stroke="#111"/><path d="M1355.8 706.6H1363.6" stroke="#111"/><path d="M1358 704.6H1361.4" stroke="#111"/>
<path d="M1509 710.6H1527.4" stroke="#111"/><path d="M1511.8 708.6H1524.6" stroke="#111"/><path d="M1514.3 706.6H1522.1" stroke="#111"/><path d="M1516.5 704.6H1519.9" stroke="#111"/>
<text x="1359.6" y="701" font-size="13" fill="#000" text-anchor="middle" font-family="'Liberation Serif',serif" stroke="none"  textLength="25.2" lengthAdjust="spacingAndGlyphs">GND</text>
<text x="1518.2" y="701" font-size="13" fill="#000" text-anchor="middle" font-family="'Liberation Serif',serif" stroke="none"  textLength="25.2" lengthAdjust="spacingAndGlyphs">GND</text>
<circle cx="1369.6" cy="720.5" r="2.5" fill="#cc0000" stroke="none"/>
<circle cx="1409.2" cy="720.5" r="2.5" fill="#cc0000" stroke="none"/>
<circle cx="1419.1" cy="720.5" r="2.5" fill="#cc0000" stroke="none"/>
<circle cx="1458.7" cy="720.5" r="2.5" fill="#cc0000" stroke="none"/>
<circle cx="1468.6" cy="720.5" r="2.5" fill="#cc0000" stroke="none"/>
<circle cx="1508.2" cy="720.5" r="2.5" fill="#cc0000" stroke="none"/>
</g>
</svg>
<!-- ===== splitters & right panel ===== -->
<div class="a" style="left:1728px;top:125.500px;width:1px;height:770px;background:#cfcfcf"></div>
<div class="a" style="left:1729px;top:125.500px;width:2.300px;height:770px;background:#fff"></div>
<div class="a dots" style="left:1731.200px;top:125.500px;width:4.700px;height:770px"></div>
<div class="a dots" style="left:184px;top:125.500px;width:5px;height:770px"></div>
<div class="a" style="left:1735.900px;top:125.500px;width:14px;height:770px;background:#dcdcdc"></div>
<div class="a" style="left:1735.900px;top:125.500px;width:14px;height:29px;background:#f0f0f0"></div>
<div class="a" style="left:1735.900px;top:154.500px;width:14px;height:26px;background:#e6e6e6"></div>
<div class="a" style="left:1735.900px;top:180.500px;width:14px;height:216.500px;background:#fff"></div>
<div class="a" style="left:1742.500px;top:163px;width:0;height:0;border-left:8px solid transparent;border-right:8px solid transparent;border-bottom:7px solid #cdcdcd"></div>
<div class="a" style="left:1736.400px;top:406.700px;width:14px;height:87.400px;background:#efefef;border:1px solid #c9c9c9;border-right:0"></div>
<div class="sep" style="left:1736.400px;top:428.200px;width:12px;background:#c9c9c9"></div>
<div class="sep" style="left:1736.400px;top:450px;width:12px;background:#c9c9c9"></div>
<div class="sep" style="left:1736.400px;top:471.800px;width:12px;background:#c9c9c9"></div>
<div class="t" style="left:1744.300px;top:134.200px;font-size:12px">选中数量</div>
<div class="t" style="left:1744.500px;top:188px;font-size:12px">背景色</div>
<div class="t" style="left:1744.500px;top:215px;font-size:12px">网格可见</div>
<div class="t" style="left:1744.500px;top:242px;font-size:12px">网格颜色</div>
<div class="t" style="left:1744.500px;top:269px;font-size:12px">网格样式</div>
<div class="t" style="left:1744.500px;top:296px;font-size:12px">网格大小</div>
<div class="t" style="left:1744.500px;top:323px;font-size:12px">吸附</div>
<div class="t" style="left:1744.500px;top:350px;font-size:12px">栅格尺寸</div>
<div class="t" style="left:1745px;top:377.500px;font-size:12px">ALT键栅格</div>
<div class="t" style="left:1744.600px;top:413.300px;font-size:12px">光标X</div>
<div class="t" style="left:1744.600px;top:435.100px;font-size:12px">光标Y</div>
<div class="t" style="left:1744.600px;top:456.600px;font-size:12px">光标DX</div>
<div class="t" style="left:1744.600px;top:478.200px;font-size:12px">光标DY</div>
<!-- handles -->
<div class="a" style="left:184px;top:544.300px;width:5.300px;height:44.500px;background:#fff;border:1px solid #6e5f5f"></div>
<div class="a" style="left:185px;top:563.500px;width:0;height:0;border-right:3.200px solid #5a4a4a;border-top:3px solid transparent;border-bottom:3px solid transparent"></div>
<div class="a" style="left:1731.200px;top:544.300px;width:5.300px;height:44.500px;background:#fff;border:1px solid #6e5f5f"></div>
<div class="a" style="left:1732.400px;top:563.500px;width:0;height:0;border-left:3.200px solid #5a4a4a;border-top:3px solid transparent;border-bottom:3px solid transparent"></div>
<!-- ===== File menu ===== -->
<div class="a menu" style="left:139.800px;top:87px;width:168.500px;height:279.500px"></div>
<div class="a menu" style="left:306px;top:270.600px;width:138.500px;height:139.200px"></div>
<div class="a" style="left:141.900px;top:272.800px;width:163.100px;height:21px;background:#5588fd"></div>
<div class="a" style="left:307.300px;top:365.300px;width:134.500px;height:21.300px;background:#5588fd"></div>
<div class="sep" style="left:142px;top:136.200px;width:164px"></div>
<div class="sep" style="left:142px;top:186px;width:164px"></div>
<div class="sep" style="left:142px;top:213.300px;width:164px"></div>
<div class="sep" style="left:142px;top:241px;width:164px"></div>
<div class="sep" style="left:142px;top:269.200px;width:164px"></div>
<div class="sep" style="left:142px;top:340px;width:163.500px"></div>
<div class="sep" style="left:308px;top:340px;width:134px"></div>
<div class="arr" style="left:290.800px;top:96.800px"></div>
<div class="arr d" style="left:290.800px;top:118.500px"></div>
<div class="arr d" style="left:290.800px;top:224.300px"></div>
<div class="arr" style="left:290.800px;top:280px;border-left-color:#fff"></div>
<div class="arr" style="left:290.800px;top:322.800px"></div>
<svg style="left:140px;top:87px" width="30" height="285" viewBox="140 87 30 285" fill="none" stroke-linejoin="round" stroke-linecap="round">
  <!-- new -->
  <path d="M147.500 94.500h7.800l3 3v10h-10.800Z" fill="#fdfdfd" stroke="#8e98a8" stroke-width="0.900"/>
  <path d="M155.300 94.500v3h3" stroke="#8e98a8" stroke-width="0.800"/>
  <path d="M157 104.200v6M154 107.200h6" stroke="#2fa52f" stroke-width="2.600" stroke-linecap="butt"/>
  <!-- open (faded) -->
  <path d="M146.300 128.700v-9.400a1 1 0 0 1 1-1h3.400l1.300 1.500h6.200a1 1 0 0 1 1 1v1.700h-9.500l-2.600 6.300Z" fill="#f8e7a8" stroke="#e3c978" stroke-width="0.800"/>
  <path d="M147 129l2.800-6.500h11l-2.800 6.500Z" fill="#fbefbf" stroke="#e3c978" stroke-width="0.800"/>
  <!-- save -->
  <rect x="146.300" y="145.300" width="12.800" height="12.600" rx="1" fill="#3b3fa8" stroke="#23267a" stroke-width="0.800"/>
  <rect x="148.600" y="145.600" width="8.200" height="5.600" fill="#e9ebf7"/>
  <rect x="149.300" y="153.300" width="6.500" height="4.300" fill="#c9cbe0"/>
  <rect x="150.300" y="154.200" width="1.800" height="2.800" fill="#23267a"/>
  <!-- import (faded) -->
  <rect x="145.600" y="221.300" width="12" height="14.300" fill="#fafcff" stroke="#b8cde6" stroke-width="0.900"/>
  <path d="M159.800 231.300h-6v2.500l-4.600-3.800l4.600-3.800v2.500h6Z" fill="#a9dba0" stroke="#8fcf86" stroke-width="0.600"/>
  <!-- print -->
  <path d="M149 252.500v-3.500h6l1.800 1.800v1.700Z" fill="#eef3fb" stroke="#9fb4d6" stroke-width="0.800"/>
  <rect x="145.600" y="252.500" width="14" height="7" rx="1.600" fill="#b9b9b9" stroke="#7d7d7d" stroke-width="0.800"/>
  <rect x="148.600" y="258" width="8" height="4.300" fill="#f3f6fb" stroke="#9fb4d6" stroke-width="0.800"/>
  <path d="M146.300 256.300h12.600" stroke="#8a8a8a" stroke-width="0.700"/>
  <!-- export -->
  <rect x="145.600" y="277.300" width="12" height="14" fill="#f4f8ff" stroke="#dfe8f7" stroke-width="0.900"/>
  <path d="M149 283.600h6v-2.500l4.600 3.800l-4.600 3.800v-2.500h-6Z" fill="#45b545" stroke="#2e962e" stroke-width="0.600"/>
  <!-- bom -->
  <path d="M146 312v-12.300h4.400l1.300 1.700h7.800v10.600Z" stroke="#333" stroke-width="1.200"/>
  <!-- pencil -->
  <path d="M147.800 359.300l.9-3l8.300-7.600l2 2.200l-8.300 7.600Z" fill="#52b43c" stroke="#2f8f24" stroke-width="0.700"/>
  <path d="M147.800 359.300l.9-3l2 2.200Z" fill="#e8d7a8" stroke="#7a6a3a" stroke-width="0.400"/>
</svg>
<div class="t" style="left:150.300px;top:302.300px;font-size:8px;font-weight:700;color:#333">B</div>
<div class="t mi" style="letter-spacing:-0.308px;left:165.400px;top:95.500px">新建</div>
<div class="t mi d" style="letter-spacing:-0.308px;left:165.400px;top:117.200px">打开</div>
<div class="t mi" style="letter-spacing:-0.303px;left:165.400px;top:145.600px">保存...</div>
<div class="t mi" style="letter-spacing:-0.198px;left:263px;top:145.600px">Ctrl+S</div>
<div class="t mi" style="letter-spacing:-0.336px;left:165.400px;top:167.300px">另存为...</div>
<div class="t mi" style="letter-spacing:-0.314px;left:165.400px;top:194.600px">另存为模块...</div>
<div class="t mi d" style="letter-spacing:-0.308px;left:165.400px;top:222.400px">导入</div>
<div class="t mi" style="letter-spacing:-0.303px;left:165.400px;top:250.500px">打印...</div>
<div class="t mi" style="letter-spacing:-0.308px;left:165.400px;top:277.900px;color:#fff">导出</div>
<div class="t mi" style="letter-spacing:-0.293px;left:165.400px;top:300.300px">导出BOM...</div>
<div class="t mi" style="letter-spacing:-0.254px;left:165.400px;top:321px">导出网表</div>
<div class="t mi" style="letter-spacing:-0.331px;left:165.400px;top:349.600px">文件源码...</div>
<!-- submenu -->
<div class="t mi" style="letter-spacing:-0.279px;left:331.200px;top:278.800px">PDF...</div>
<div class="t mi" style="letter-spacing:-0.253px;left:331.200px;top:299.600px">PNG...</div>
<div class="t mi" style="letter-spacing:-0.307px;left:331.200px;top:321.800px">SVG...</div>
<div class="t mi" style="letter-spacing:-0.169px;left:331.200px;top:350px">Altium Designer...</div>
<div class="t mi" style="letter-spacing:-0.243px;left:331.200px;top:370.400px;color:#fff">嘉立创EDA...</div>
<div class="t mi" style="letter-spacing:-0.232px;left:331.200px;top:392.400px">SVG源码...</div>
<!-- ===== floating tool panels ===== -->
<div class="a" style="left:1470.800px;top:160px;width:188.600px;height:80.200px;background:#fafafa;border-radius:3px;box-shadow:0 1px 4px rgba(0,0,0,.35)"></div>
<div class="a" style="left:1470.800px;top:160px;width:188.600px;height:20.400px;background:#efefef;border-radius:3px 3px 0 0;border-bottom:1px solid #cfcfcf"></div>
<div class="a" style="left:1664.800px;top:160px;width:61.200px;height:206.800px;background:#fafafa;border-radius:3px;box-shadow:0 1px 4px rgba(0,0,0,.35)"></div>
<div class="a" style="left:1664.800px;top:160px;width:61.200px;height:20.400px;background:#efefef;border-radius:3px 3px 0 0;border-bottom:1px solid #cfcfcf"></div>
<div class="t" style="letter-spacing:-0.200px;left:1476px;top:163.800px;font-size:11px;color:#222">电气工具</div>
<div class="t" style="letter-spacing:-0.034px;left:1669.200px;top:164.300px;font-size:11px;color:#222">绘图...</div>
<svg style="left:1460px;top:150px" width="288" height="230" viewBox="1460 150 288 230" fill="none" stroke="#444" stroke-width="1.100" stroke-linecap="round" stroke-linejoin="round">
  <path d="M1644.300 168.300H1654.800M1712 168.300H1722.500" stroke="#333" stroke-width="1"/>
  <!-- row 1 -->
  <circle cx="1482.200" cy="194.900" r="1.500"/><path d="M1483.700 194.900H1488.300V204.100H1493.100"/><circle cx="1494.700" cy="204.100" r="1.600"/>
  <path d="M1507.200 193.500H1511.500Q1513.500 193.500 1513.500 195.500V205.300M1513.500 200.500L1515 199.300H1519.800M1513.500 204.200L1515 203H1519.800"/>
  <path d="M1532.900 193.800L1545 205.400"/>
  <rect x="1557" y="193.200" width="13.700" height="9.500"/><path d="M1563.800 202.700V205.800"/>
  <path d="M1589 193.200V198.600M1581.800 198.600H1596.200M1583.900 201.200H1594.100M1586 203.500H1592M1587.500 205.500H1590.500"/>
  <path d="M1614.400 192.600V197.800M1606.200 197.800H1622.800L1614.400 205.800Z"/>
  <path d="M1630.800 193.500H1641.100L1647.900 199.400L1641.100 205.400H1630.800Z"/>
  <!-- row 2 -->
  <path d="M1480.900 224.100H1495.600M1488.300 224.100V231.700M1506 224.100H1520.700M1513.500 224.100V231.700"/>
  <path d="M1532.900 218.700L1545 230.600M1545 218.700L1532.900 230.600"/>
  <path d="M1553.500 232.100L1556.800 228.200L1563.600 221.100Q1565 219.800 1565.800 220.700Q1566.500 221.600 1565.300 222.900L1557.800 229.300ZM1565.800 220.700Q1568 217.600 1570.300 218.800T1574.700 218.300" stroke-width="1"/>
  <circle cx="1581.700" cy="226.900" r="1.700"/><path d="M1583.400 226.900H1594M1595.200 224.700V229.200M1597.700 224.700V229.200M1588.200 221.300L1589.300 220.500V224.300"/>
  <rect x="1611" y="221" width="5.600" height="5.600"/><rect x="1613.500" y="223.500" width="5.600" height="5.600"/>
  <path d="M1608.600 220V230.500H1620M1609.500 219H1613" />
  <rect x="1607.300" y="217.800" width="2" height="2"/><rect x="1620.200" y="217.800" width="2" height="2"/><rect x="1607.300" y="229.500" width="2" height="2"/><rect x="1620.200" y="229.500" width="2" height="2"/>
  <!-- drawing tools -->
  <rect x="1673.300" y="192.800" width="17.500" height="13.400"/><path d="M1681.800 200.800H1690.800M1681.800 200.800V206.200M1681.800 203.500H1690.800M1686.300 200.800V206.200"/>
  <path d="M1713.300 190L1697.600 200.800L1716.200 199.200L1703.600 208.800"/>
  <path d="M1673.600 221.500Q1674.200 231.500 1678.600 231.500Q1682.600 231.300 1682 224Q1681.400 216.800 1685.400 216.600Q1689.600 216.500 1690.300 226.300"/>
  <path d="M1713.200 221.700A6.800 6.800 0 1 0 1710.700 231M1704.900 225.100H1709.700M1707.300 222.700V227.500"/>
  <path d="M1674.500 244.500L1687.900 251L1674.500 257.800L1678.200 251Z"/>
  <path d="M1700.200 244.700H1713.600V248.300H1712.300Q1712 246.200 1710.300 246.200H1708.400V254.600Q1708.400 255.600 1710 255.600V256.600H1703.800V255.600Q1705.400 255.600 1705.400 254.600V246.200H1703.500Q1701.800 246.200 1701.500 248.300H1700.200Z"/>
  <path d="M1673.800 282.500L1675.300 277.600L1685 268.800L1689.500 273.400L1679.600 282Z M1675.300 277.600L1679.600 282M1677 276L1681.300 280.500M1678.700 274.500L1683 279"/>
  <rect x="1700" y="269.200" width="13.800" height="12.900"/>
  <path d="M1672.600 294.200H1684.300L1690.800 300.900L1684.300 307.500H1672.600L1678.200 300.900Z"/>
  <circle cx="1706.800" cy="300.700" r="7.200"/>
  <path d="M1686.800 320.700A6.900 6.900 0 1 0 1686.800 329.700L1682 325.200Z"/>
  <rect x="1699.300" y="319.200" width="15.700" height="12.600"/><path d="M1699.500 328.500Q1702.500 324 1705.500 327T1714.800 324.500"/><circle cx="1710.800" cy="322.700" r=".8" fill="#444"/>
  <path d="M1678.500 352.500V344.600a1 1 0 0 1 2 0V350M1680.500 349.500V343.300a1 1 0 0 1 2 0V349.500M1682.500 349.500V344a1 1 0 0 1 2 0V350M1684.500 350.500V346a1 1 0 0 1 2 0V353Q1686.500 358.300 1682.500 358.300H1681.500Q1679.500 358.300 1678.300 356.300L1675.500 351.600Q1675 350.300 1676 350Q1677 349.700 1678.500 352.500" stroke-width="1"/>
  <path d="M1700 344.500V357M1700 344.500H1713M1698.700 354.800L1700 357.500L1701.300 354.800M1711.300 343.200L1714 344.500L1711.300 345.800"/><circle cx="1700" cy="344.500" r=".9" fill="#444"/>
</svg>
<div class="t" style="left:1561.200px;top:194.300px;font-size:7.500px;font-weight:700;color:#444">N</div>
<div class="t" style="left:1480.600px;top:217px;font-size:6.500px;font-weight:700;color:#444;letter-spacing:.3px">VCC</div>
<div class="t" style="left:1505.800px;top:217px;font-size:6.500px;font-weight:700;color:#444;letter-spacing:.2px">+5V</div>

</body>
</html>
